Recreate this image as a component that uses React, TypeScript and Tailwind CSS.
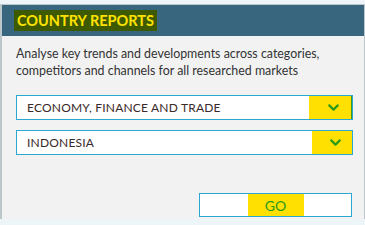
import { ChevronDown } from 'lucide-react';

const font = { fontFamily: 'Lato, "Open Sans", Arial, sans-serif' };

function Select({ label, boxWidth }: { label: string; boxWidth: string }) {
  return (
    <div className="flex h-[25px] w-[337px] items-stretch border border-[#2aa8d4] bg-white">
      <div className="flex flex-1 items-center pl-[10px] text-[12px] tracking-[0.2px] text-[#3a2a2a]">{label}</div>
      <div className={`flex items-center justify-center pl-[6px] bg-[#ffe000] ${boxWidth}`}>
        <ChevronDown size={17} strokeWidth={3} className="text-[#2a9a1a]" />
      </div>
    </div>
  );
}

export default function App() {
  return (
    <div className="h-[225px] w-[365px] bg-[#eef5f8] pt-[4px]" style={font}>
      <div className="flex h-[215px] flex-col border-l-2 border-r border-t border-[#bcc6cb] bg-[#f2f2f2]">
        <div className="flex h-[31px] items-center bg-[#37667e] pl-[12px]">
          <span className="bg-[#3e5a00] px-[3px] py-[2px] text-[14.5px] font-bold leading-[17px] text-[#ffe300]">
            COUNTRY REPORTS
          </span>
        </div>
        <p className="mt-[9px] pl-[14px] text-[12.4px] leading-[17px] text-[#333]">
          Analyse key trends and developments across categories,
          <br />
          competitors and channels for all researched markets
        </p>
        <div className="mt-[16px] flex flex-col gap-[10px] pl-[14px]">
          <Select label="ECONOMY, FINANCE AND TRADE" boxWidth="w-[43px] border-r border-[#3a9a20]" />
          <Select label="INDONESIA" boxWidth="w-[40px]" />
        </div>
        <div className="mt-[38px] flex pl-[197px]">
          <button className="flex h-[24px] w-[153px] justify-center border border-[#2aa8d4] bg-white">
            <span className="flex w-[56px] items-center justify-center bg-[#ffe000] text-[14px] text-[#2a9a1a]">GO</span>
          </button>
        </div>
      </div>
    </div>
  );
}
